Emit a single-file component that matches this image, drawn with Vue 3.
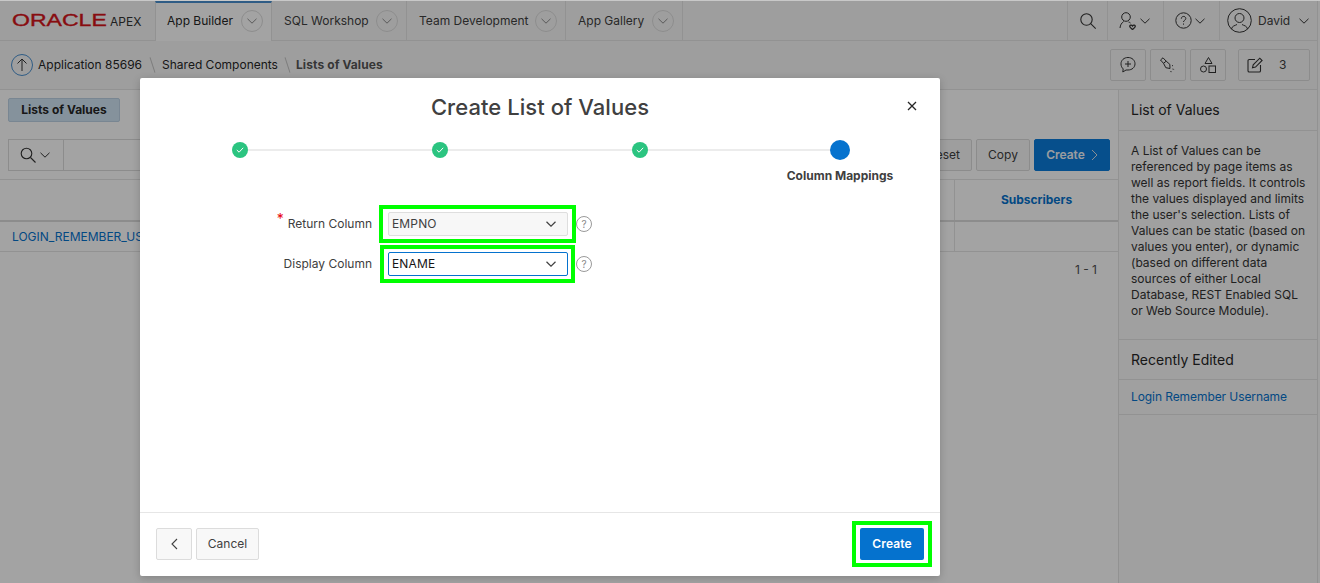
<template>
  <div class="page">
    <header class="topbar">
      <div class="brand"><span class="oracle">ORACLE</span><span class="apex">APEX</span></div>
      <nav class="tabs">
        <div v-for="(t, i) in tabs" :key="t.name" class="tab" :class="{ active: i === 0 }" :style="{ width: t.w + 'px' }">
          <span>{{ t.name }}</span>
          <span class="tab-chev"><svg width="10" height="6" viewBox="0 0 10 6"><path d="M.5.8 5 5.2 9.5.8" fill="none" stroke="#8d8d8d"/></svg></span>
        </div>
      </nav>
      <div class="spacer"></div>
      <div class="tool t-search">
        <svg width="18" height="18" viewBox="0 0 18 18" fill="none" stroke="#333" stroke-width="1.1"><circle cx="7.5" cy="7.5" r="5.7"/><path d="m11.7 11.7 5 5"/></svg>
      </div>
      <div class="tool t-user">
        <svg width="18" height="18" viewBox="0 0 18 18" fill="none" stroke="#333" stroke-width="1"><circle cx="7" cy="5" r="4.300"/><path d="M1 16c.3-3 1.500-5 3.700-6.500M9.500 10c1 .2 1.500.6 2 1"/><path d="M13.500 14c-.9-1.500-3-.9-2.700.6.200.9 1.500 1.800 2.700 2.900 1.200-1.100 2.500-2 2.700-2.900.3-1.500-1.800-2.100-2.700-.6Z" stroke-width="1.300"/></svg>
        <svg class="mini" width="10" height="6" viewBox="0 0 10 6"><path d="M.5.800 5 5.200 9.500.8" fill="none" stroke="#333"/></svg>
      </div>
      <div class="tool t-help">
        <svg width="17" height="17" viewBox="0 0 17 17" fill="none" stroke="#333"><circle cx="8.500" cy="8.500" r="7.700"/><path d="M6.300 6.700c0-3 4.500-3 4.500-.2 0 1.800-2.300 1.700-2.300 3.500"/><path d="M8.500 11.500v1.200"/></svg>
        <svg class="mini" width="10" height="6" viewBox="0 0 10 6"><path d="M.5.800 5 5.200 9.500.8" fill="none" stroke="#333"/></svg>
      </div>
      <div class="tool t-account">
        <svg width="25" height="25" viewBox="0 0 25 25" fill="none" stroke="#333"><circle cx="12.500" cy="12.500" r="11.800"/><circle cx="12.500" cy="10" r="4.500"/><path d="M4.500 21c.5-3.200 3.500-3.300 5.500-4.500M20.500 21c-.5-3.200-3.500-3.300-5.500-4.500"/></svg>
        <span class="david">David</span>
        <svg class="mini" width="10" height="6" viewBox="0 0 10 6"><path d="M.5.800 5 5.200 9.500.8" fill="none" stroke="#333"/></svg>
      </div>
    </header>

    <div class="crumbs">
      <span class="up"><svg width="12" height="14" viewBox="0 0 12 14" fill="none" stroke="#333"><path d="M6 13V1M1.500 5.500 6 1l4.500 4.500"/></svg></span>
      <span class="crumb">Application 85696</span><span class="slash"></span>
      <span class="crumb">Shared Components</span><span class="slash"></span>
      <span class="crumb current">Lists of Values</span>
      <div class="spacer"></div>
      <button class="icon-btn">
        <svg width="18" height="18" viewBox="0 0 18 18" fill="none" stroke="#333"><path d="M9 1.500c4 0 7 2.700 7 6.300s-3 6.200-7 6.200H7L3.800 16l.4-3.100C2.800 11.700 2 10 2 7.800c0-3.600 3-6.300 7-6.300Z"/><path d="M9 5v6M6 8h6"/></svg>
      </button>
      <button class="icon-btn">
        <svg width="18" height="18" viewBox="0 0 18 18" fill="none" stroke="#333"><path d="M1.500 4 4 1.800l3.200 3.400 3.600 3.100L11 12.500 6.800 11.700 4.500 7.300Z"/><path d="m4.500 7.300 2.700-2.100"/><path d="m13 10 1.500-1M13.500 13l2 .6M11.800 15l.5 1.800" stroke-dasharray="1.200 .8"/></svg>
      </button>
      <button class="icon-btn">
        <svg width="18" height="18" viewBox="0 0 18 18" fill="none" stroke="#333"><path d="M9.500 1.500 13 7.500H6Z"/><circle cx="4.500" cy="13" r="3"/><rect x="10" y="10" width="6.500" height="6.500"/></svg>
      </button>
      <button class="edit-btn">
        <svg width="16" height="16" viewBox="0 0 16 16" fill="none" stroke="#333" stroke-width="1.100"><path d="M8 2.500H2.300a1.300 1.300 0 0 0-1.300 1.300v9.900A1.300 1.300 0 0 0 2.300 15h9.900a1.300 1.300 0 0 0 1.300-1.300V8"/><path d="m5.500 10.800.7-3L12.800 1.200l2.300 2.300-6.600 6.600Z"/></svg>
        <span>3</span>
      </button>
    </div>

    <div class="main">
      <section class="content">
        <div class="content-tabs"><span class="lov-tab">Lists of Values</span></div>
        <div class="toolbar">
          <span class="search-box">
            <svg width="16" height="16" viewBox="0 0 16 16" fill="none" stroke="#333" stroke-width="1.100"><circle cx="6.500" cy="6.500" r="5.300"/><path d="m10.500 10.500 5 5"/></svg>
            <svg width="10" height="6" viewBox="0 0 10 6"><path d="M.5.800 5 5.200 9.500.8" fill="none" stroke="#333"/></svg>
          </span>
          <span class="search-input"></span>
          <div class="spacer"></div>
          <button class="tb-btn">Reset</button>
          <button class="tb-btn copy">Copy</button>
          <button class="tb-btn primary">Create <svg width="7" height="12" viewBox="0 0 7 12"><path d="m1 1 5 5-5 5" fill="none" stroke="#d8dfe6"/></svg></button>
        </div>
        <div class="thead"><div class="th-fill"></div><div class="th">Subscribers</div></div>
        <div class="trow"><a class="row-link">LOGIN_REMEMBER_USERNAME</a><div class="spacer"></div><div class="td-last"></div></div>
        <div class="pager">1 - 1</div>
      </section>
      <aside class="side">
        <h3 class="side-title">List of Values</h3>
        <p class="side-text">A List of Values can be referenced by page items as well as report fields. It controls the values displayed and limits the user's selection. Lists of Values can be static (based on values you enter), or dynamic (based on different data sources of either Local Database, REST Enabled SQL or Web Source Module).</p>
        <h3 class="side-title second">Recently Edited</h3>
        <a class="side-link">Login Remember Username</a>
      </aside>
    </div>

    <div class="edge"></div>
    <div class="scrim"></div>

    <div class="modal">
      <div class="modal-head">
        <h1>Create List of Values</h1>
        <svg class="close" width="10" height="10" viewBox="0 0 10 10"><path d="m1 1 8 8M9 1 1 9" stroke="#262626" stroke-width="1.300" fill="none"/></svg>
      </div>
      <div class="steps">
        <div class="track"></div>
        <div v-for="n in 3" :key="n" class="step">
          <span class="dot done"><svg width="8" height="6" viewBox="0 0 8 6"><path d="m.8 3 2.300 2.200L7.200.8" fill="none" stroke="#fff" stroke-width="1"/></svg></span>
        </div>
        <div class="step">
          <span class="dot now"></span>
          <span class="step-label">Column Mappings</span>
        </div>
      </div>
      <div class="form">
        <div class="row">
          <label class="lab"><span class="req">*</span>Return Column</label>
          <div class="hl hl-a"><div class="sel first"><span>EMPNO</span><svg width="10" height="6" viewBox="0 0 10 6"><path d="M.5.800 5 5.200 9.500.8" fill="none" stroke="#404040" stroke-width="1.200"/></svg></div></div>
          <span class="help">?</span>
        </div>
        <div class="row">
          <label class="lab">Display Column</label>
          <div class="hl hl-b"><div class="sel focus"><span>ENAME</span><svg width="10" height="6" viewBox="0 0 10 6"><path d="M.5.800 5 5.200 9.500.8" fill="none" stroke="#404040" stroke-width="1.200"/></svg></div></div>
          <span class="help">?</span>
        </div>
      </div>
      <div class="foot">
        <button class="foot-btn back"><svg width="7" height="12" viewBox="0 0 7 12"><path d="M6 1 1 6l5 5" fill="none" stroke="#404040" stroke-width="1.100"/></svg></button>
        <button class="foot-btn cancel">Cancel</button>
        <div class="spacer"></div>
        <div class="hl-create"><button class="create">Create</button></div>
      </div>
    </div>
  </div>
</template>

<script setup>
const tabs = [
  { name: 'App Builder', w: 117 },
  { name: 'SQL Workshop', w: 135 },
  { name: 'Team Development', w: 159 },
  { name: 'App Gallery', w: 117 }
]
</script>

<style>
html, body { margin: 0; background: #fff; overflow: hidden; }
</style>

<style scoped>
.page { position: relative; width: 1320px; height: 583px; overflow: hidden; background: #c8c8c8; color: #262626; font: 12px/16px Inter, "Liberation Sans", sans-serif; }
.spacer { flex: 1; }
button { font: inherit; margin: 0; cursor: default; }
svg { display: block; flex: none; }

.topbar { display: flex; height: 39px; margin-top: 1px; background: #f8f8f8; border-bottom: 1px solid #e5e5e5; box-sizing: content-box; }
.brand { width: 155px; display: flex; align-items: center; padding-left: 12px; box-sizing: border-box; }
.oracle { display: inline-block; width: 98px; color: #d5141a; font: 400 16px/16px "Liberation Sans", sans-serif; -webkit-text-stroke: .35px #d5141a; transform: scaleX(1.44); transform-origin: left center; }
.apex { font-size: 12px; color: #333; position: relative; top: 1px; }
.tabs { display: flex; }
.tab { display: flex; align-items: center; justify-content: space-between; box-sizing: border-box; padding: 0 8px 0 12px; border-right: 1px solid #e5e5e5; height: 39px; color: #404040; }
.tab.active { background: #fff; color: #262626; border-left: 1px solid #e5e5e5; border-top: 2px solid #4a90d0; height: 40px; padding-bottom: 2px; padding-left: 11px; }
.tab-chev { width: 22px; height: 22px; border: 1px solid #ddd; border-radius: 50%; display: flex; align-items: center; justify-content: center; box-sizing: border-box; }
.tool { display: flex; align-items: center; border-left: 1px solid #e5e5e5; height: 39px; box-sizing: border-box; }
.t-search { width: 40px; padding-left: 11px; }
.t-user { width: 56px; padding-left: 11px; gap: 3px; }
.t-help { width: 56px; padding-left: 11px; gap: 3px; }
.t-account { width: 101px; padding-left: 7px; }
.david { margin-left: 6px; color: #404040; }
.t-account .mini { margin-left: 9px; }

.crumbs { display: flex; align-items: center; height: 48px; background: #f8f8f8; border-bottom: 1px solid #e5e5e5; padding: 0 10px 0 11px; }
.up { width: 22px; height: 22px; border: 1px solid #4a90d0; border-radius: 50%; box-sizing: border-box; display: flex; align-items: center; justify-content: center; margin-right: 5px; }
.crumb { white-space: nowrap; }
.crumb.current { font-weight: 700; color: #555; letter-spacing: .1px; }
.slash { width: 1px; height: 16px; background: #c4c4c4; transform: rotate(-18deg); margin: 0 9px; }
.slash:nth-of-type(3) { margin: 0 9px 0 10px; }
.slash:nth-of-type(5) { margin: 0 8px 0 9px; }
.icon-btn { width: 36px; height: 32px; border: 1px solid #dcdcdc; border-radius: 2px; background: #f8f8f8; display: flex; align-items: center; justify-content: center; padding: 0; margin-right: 4px; }
.icon-btn:nth-last-child(2) { margin-right: 12px; }
.edit-btn { width: 72px; height: 32px; border: 1px solid #dcdcdc; border-radius: 2px; background: #f8f8f8; display: flex; align-items: center; padding: 0 0 0 8px; color: #404040; }
.edit-btn span { margin-left: 16px; }

.main { display: flex; height: 493px; }
.content { width: 1118px; background: #fff; }
.content-tabs { height: 41px; padding: 8px 0 0 8px; box-sizing: border-box; }
.lov-tab { display: block; width: 112px; height: 24px; box-sizing: border-box; background: #d0e4f5; border: 1px solid #bdd2e4; border-radius: 2px; font-weight: 700; font-size: 12px; line-height: 22px; text-align: center; }
.toolbar { height: 48px; display: flex; align-items: flex-start; padding: 8px 8px 0; box-sizing: border-box; }
.search-box { width: 56px; height: 32px; box-sizing: border-box; border: 1px solid #dcdcdc; display: flex; align-items: center; gap: 4px; padding-left: 11px; }
.search-input { width: 200px; height: 32px; box-sizing: border-box; border: 1px solid #dcdcdc; border-left: 0; }
.tb-btn { height: 32px; box-sizing: border-box; border: 1px solid #dcdcdc; border-radius: 2px; background: #f8f8f8; color: #404040; padding: 0; width: 56px; margin-left: 4px; }
.tb-btn.copy { width: 54px; }
.tb-btn.primary { width: 76px; background: #0a7cdc; border-color: #0a7cdc; color: #f0f5fa; font-weight: 600; display: flex; align-items: center; justify-content: center; gap: 6px; }
.thead { display: flex; height: 43px; box-sizing: border-box; border-top: 1px solid #e5e5e5; border-bottom: 2px solid #dcdcdc; }
.th-fill { flex: 1; border-right: 1px solid #e5e5e5; }
.th { width: 163px; color: #0572ce; font-weight: 700; text-align: center; line-height: 39px; }
.trow { display: flex; align-items: center; height: 30px; box-sizing: border-box; border-bottom: 1px solid #e5e5e5; }
.row-link { color: #0572ce; padding-left: 12px; white-space: nowrap; }
.td-last { width: 163px; height: 100%; border-left: 1px solid #e5e5e5; }
.pager { text-align: right; padding: 10px 21px 0 0; color: #505050; }

.side { width: 202px; box-sizing: border-box; border-left: 1px solid #e5e5e5; background: #fafafa; }
.side-title { margin: 0; height: 41px; box-sizing: border-box; padding: 11px 12px 0; font-size: 14px; line-height: 18px; font-weight: 400; border-bottom: 1px solid #e5e5e5; background: #fafafa; }
.side-title.second { height: 41px; border-top: 1px solid #e5e5e5; padding-top: 11px; }
.side-text { margin: 0; padding: 12px 12px 20px; height: 208px; box-sizing: border-box; background: #fafafa; line-height: 16px; color: #333; font-size: 12px; }
.side-link { display: block; height: 35px; box-sizing: border-box; padding: 9px 12px 0; color: #0572ce; white-space: nowrap; border-bottom: 1px solid #e5e5e5; background: #fafafa; letter-spacing: -.08px; }

.edge { position: absolute; top: 1px; right: 0; bottom: 0; width: 2px; background: #fafafa; border-left: 1px solid #e5e5e5; }
.scrim { position: absolute; inset: 1px 0 0; background: rgba(0, 0, 0, .36); }

.modal { position: absolute; left: 140px; top: 78px; width: 800px; height: 498px; background: #fff; border-radius: 2px; box-shadow: 0 2px 8px rgba(0, 0, 0, .2); display: flex; flex-direction: column; }
.modal-head { height: 54px; box-sizing: border-box; padding-top: 4px; display: flex; align-items: center; justify-content: center; position: relative; }
.modal-head h1 { margin: 0; font-size: 22px; line-height: 30px; font-weight: 500; color: #404040; letter-spacing: .05px; }
.close { position: absolute; right: 23px; top: 23px; }
.steps { position: relative; height: 72px; display: grid; grid-template-columns: repeat(4, 200px); width: 800px; }
.track { position: absolute; left: 100px; width: 600px; top: 17px; height: 2px; background: #ececec; }
.step { position: relative; display: flex; flex-direction: column; align-items: center; }
.dot { position: relative; border-radius: 50%; display: flex; align-items: center; justify-content: center; }
.dot.done { width: 16px; height: 16px; background: #2bc480; margin-top: 10px; }
.dot.now { width: 20px; height: 20px; background: #0572ce; margin-top: 8px; }
.step-label { margin-top: 8px; font-weight: 700; color: #404040; white-space: nowrap; font-size: 12px; }
.form { flex: 1; padding-top: 1px; }
.row { display: flex; align-items: center; height: 38px; margin-bottom: 2px; }
.lab { width: 232px; text-align: right; color: #404040; margin-right: 7px; position: relative; }
.req { color: #e8000b; font-size: 14px; line-height: 10px; position: relative; top: -4px; margin-right: 4px; }
.hl { height: 38px; box-sizing: border-box; border: 4px solid #00ff00; display: flex; align-items: center; }
.hl-a { width: 197px; padding-left: 5px; }
.hl-b { width: 195px; margin-left: 1px; padding-left: 4px; }
.sel { width: 180px; height: 24px; box-sizing: border-box; border: 1px solid #dedede; border-radius: 2px; background: #f7f7f7; display: flex; align-items: center; justify-content: space-between; padding: 0 11px 0 3px; color: #404040; letter-spacing: .15px; }
.sel.focus { background: #fff; border-color: #0572ce; color: #161513; }
.help { width: 16px; height: 16px; box-sizing: border-box; border: 1px solid #9a9a9a; border-radius: 50%; font-size: 10px; line-height: 14px; text-align: center; color: #8a8a8a; }
.row:last-child .help { margin-left: 1px; }
.foot { height: 64px; box-sizing: border-box; border-top: 1px solid #e6e6e6; display: flex; padding: 15px 8px 0 16px; align-items: flex-start; }
.foot-btn { height: 32px; box-sizing: border-box; border: 1px solid #dcdcdc; border-radius: 2px; background: #f8f8f8; color: #404040; display: flex; align-items: center; justify-content: center; padding: 0; }
.back { width: 36px; margin-right: 4px; }
.cancel { width: 63px; }
.hl-create { width: 80px; height: 46px; box-sizing: border-box; border: 4px solid #00ff00; display: flex; align-items: center; justify-content: center; margin-top: -7px; }
.create { width: 64px; height: 32px; border: 0; border-radius: 2px; background: #0572ce; color: #fff; font-weight: 600; padding: 0; letter-spacing: .1px; }
</style>
